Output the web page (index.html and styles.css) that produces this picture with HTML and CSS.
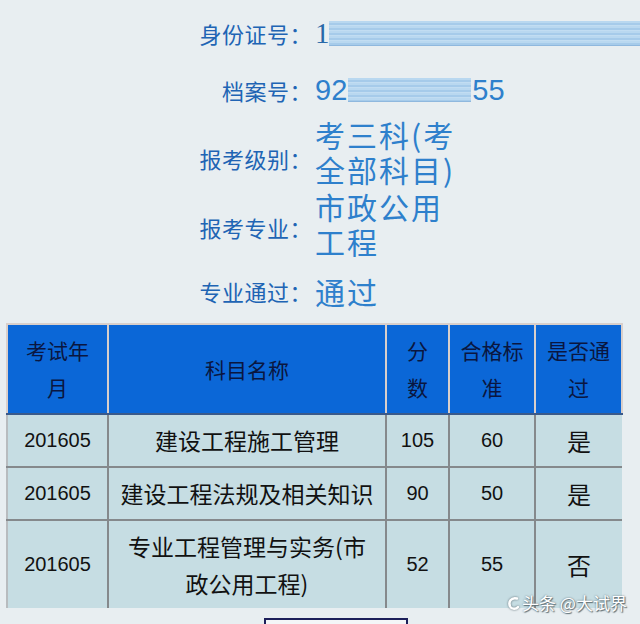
FILE: index.html
```html
<!DOCTYPE html>
<html lang="zh-CN">
<head>
<meta charset="utf-8">
<title>成绩查询</title>
<link rel="stylesheet" href="styles.css">
</head>
<body>
<div class="page">
  <div class="info">
    <div class="row r1">
      <div class="label">身份证号：</div>
      <div class="value num serif">1<span class="mask mask-id"></span></div>
    </div>
    <div class="row r2">
      <div class="label">档案号：</div>
      <div class="value num">92<span class="mask mask-file"></span>55</div>
    </div>
    <div class="row r3">
      <div class="label lab3">报考级别：</div>
      <div class="value wrap">考三科(考全部科目)</div>
    </div>
    <div class="row r4">
      <div class="label lab4">报考专业：</div>
      <div class="value wrap">市政公用工程</div>
    </div>
    <div class="row r5">
      <div class="label">专业通过：</div>
      <div class="value">通过</div>
    </div>
  </div>

  <table class="scores">
    <colgroup>
      <col class="c1"><col class="c2"><col class="c3"><col class="c4"><col class="c5">
    </colgroup>
    <thead>
      <tr>
        <th>考试年<br>月</th>
        <th>科目名称</th>
        <th>分<br>数</th>
        <th>合格标<br>准</th>
        <th>是否通<br>过</th>
      </tr>
    </thead>
    <tbody>
      <tr class="d1">
        <td class="n">201605</td>
        <td class="t">建设工程施工管理</td>
        <td class="n">105</td>
        <td class="n">60</td>
        <td class="yn">是</td>
      </tr>
      <tr class="d2">
        <td class="n">201605</td>
        <td class="t">建设工程法规及相关知识</td>
        <td class="n">90</td>
        <td class="n">50</td>
        <td class="yn">是</td>
      </tr>
      <tr class="d3">
        <td class="n">201605</td>
        <td class="t">专业工程管理与实务(市<br>政公用工程)</td>
        <td class="n">52</td>
        <td class="n">55</td>
        <td class="yn">否</td>
      </tr>
    </tbody>
  </table>

  <div class="bottom-box"></div>

  <div class="watermark">
    <svg class="wm-logo" width="13" height="15" viewBox="0 0 13 15"><path d="M10 2.5 C4 1 1 6 3 10.5 C5 14 9.5 13 11 11" fill="none" stroke="#fff" stroke-width="2.4" stroke-linecap="round"/></svg>
    <span>头条 @大试界</span>
  </div>
</div>
</body>
</html>
```

FILE: styles.css
```css
html, body {
  margin: 0;
  padding: 0;
}
body {
  background: #e8eef1;
  font-family: "Noto Sans CJK SC", "Noto Sans", sans-serif;
  width: 640px;
  height: 624px;
  overflow: hidden;
}
.page {
  position: relative;
  width: 640px;
  height: 624px;
  overflow: hidden;
}
.info {
  padding-top: 15px;
}
.row {
  display: flex;
  align-items: center;
}
.label {
  width: 312px;
  flex: none;
  text-align: right;
  font-size: 22px;
  line-height: 36px;
  color: #2064b4;
  letter-spacing: 0.5px;
}
.value {
  margin-left: 3px;
  font-size: 30px;
  line-height: 36px;
  color: #2e80cc;
  letter-spacing: 2px;
  white-space: nowrap;
  display: flex;
  align-items: center;
}
.value.wrap {
  white-space: normal;
  display: block;
  width: 154px;
  line-height: 35px;
}
.num {
  font-family: "Liberation Sans", sans-serif;
  font-size: 29px;
  letter-spacing: 0;
}
.serif {
  font-family: "Liberation Serif", serif;
  color: #2868a8;
}
.mask {
  display: inline-block;
  background: repeating-linear-gradient(180deg, #b9d8f0 0 2px, #a6cbea 2px 4px, #c2ddf2 4px 5px);
  box-shadow: inset 0 -1px 0 #8fb8de;
}
.mask-id {
  width: 325px;
  height: 25px;
  margin-left: -1px;
}
.mask-file {
  width: 123px;
  height: 24px;
  margin-left: 1px;
  margin-right: 1px;
}
.r1 { height: 36px; }
.r2 { margin-top: 21px; }
.r3 { margin-top: 9px; }
.r4 { margin-top: 2px; }
.r5 { margin-top: 14px; }
.lab3 { padding-top: 12px; }
.lab4 { padding-top: 6px; }

.scores {
  margin-top: 14px;
  margin-left: 6px;
  width: 615px;
  border-collapse: collapse;
  table-layout: fixed;
  border-left: 2px solid #b8bcbf;
}
.c1 { width: 101px; }
.c2 { width: 278px; }
.c3 { width: 63px; }
.c4 { width: 86px; }
.c5 { width: 87px; }

.scores th {
  background: #0b67d7;
  color: #0a1640;
  font-weight: normal;
  font-size: 21px;
  line-height: 37px;
  height: 88px;
  padding: 0;
  text-align: center;
  vertical-align: middle;
  border: 2px solid #d9cfcb;
  border-bottom: 2px solid #3a5a8a;
}
.scores td {
  background: #c6dde3;
  color: #111;
  text-align: center;
  vertical-align: middle;
  padding: 0;
  border: 2px solid #85898c;
  border-top: 2px solid #f0f4f5;
}
.scores tbody tr td:first-child { border-left: 2px solid #b8bcbf; }
.scores tbody tr td:last-child { border-right: none; }
.scores tbody tr.d3 td { border-bottom: none; }
.scores td.n {
  font-family: "Liberation Sans", sans-serif;
  font-size: 20px;
}
.scores td.t {
  font-size: 23px;
  line-height: 37px;
}
.scores td.yn {
  font-size: 24px;
}
.d1 td { height: 51px; }
.d2 td { height: 51px; }
.d3 td { height: 87px; }

.bottom-box {
  position: absolute;
  left: 264px;
  top: 618px;
  width: 140px;
  height: 20px;
  border: 2px solid #1c1f5a;
  background: #f4f6f8;
}
.watermark {
  position: absolute;
  left: 507px;
  top: 592px;
  display: flex;
  align-items: center;
  gap: 2px;
  color: #ffffff;
  font-size: 17px;
  line-height: 22px;
  text-shadow: 0 0 2px #5f6f76, 1px 1px 1px #5f6f76;
}
.wm-logo {
  filter: drop-shadow(0 0 1px #5f6f76);
}
```
